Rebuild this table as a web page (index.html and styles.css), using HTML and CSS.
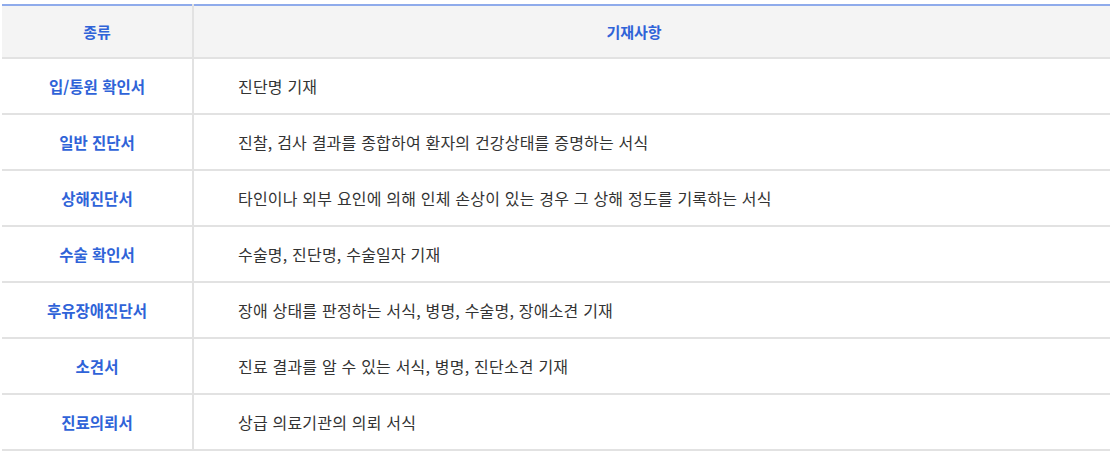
FILE: index.html
```html
<!DOCTYPE html>
<html lang="ko">
<head>
<meta charset="utf-8">
<link rel="stylesheet" href="styles.css">
</head>
<body>
<div class="wrap">
  <table class="doc-table">
    <thead>
      <tr>
        <th class="col-type">종류</th>
        <th class="col-desc">기재사항</th>
      </tr>
    </thead>
    <tbody>
      <tr><td class="type">입/통원 확인서</td><td class="desc">진단명 기재</td></tr>
      <tr><td class="type">일반 진단서</td><td class="desc">진찰, 검사 결과를 종합하여 환자의 건강상태를 증명하는 서식</td></tr>
      <tr><td class="type">상해진단서</td><td class="desc">타인이나 외부 요인에 의해 인체 손상이 있는 경우 그 상해 정도를 기록하는 서식</td></tr>
      <tr><td class="type">수술 확인서</td><td class="desc">수술명, 진단명, 수술일자 기재</td></tr>
      <tr><td class="type">후유장애진단서</td><td class="desc">장애 상태를 판정하는 서식, 병명, 수술명, 장애소견 기재</td></tr>
      <tr><td class="type">소견서</td><td class="desc">진료 결과를 알 수 있는 서식, 병명, 진단소견 기재</td></tr>
      <tr><td class="type">진료의뢰서</td><td class="desc">상급 의료기관의 의뢰 서식</td></tr>
    </tbody>
  </table>
</div>
</body>
</html>
```

FILE: styles.css
```css
html, body {
  margin: 0;
  padding: 0;
  background: #ffffff;
}
body {
  font-family: "Noto Sans CJK KR", "Noto Sans", sans-serif;
}
.wrap {
  padding: 4px 0 0 2px;
}
.doc-table {
  width: 1108px;
  border-collapse: collapse;
  table-layout: fixed;
  border-top: 2px solid #8fabeb;
}
.doc-table th {
  background: #f4f4f4;
  height: 51px;
  padding: 0;
  font-size: 15px;
  font-weight: 700;
  color: #2f63d8;
  border-bottom: 2px solid #e2e2e2;
  text-align: center;
}
.col-type {
  width: 190px;
  border-right: 2px solid #e2e2e2;
}
.doc-table th.col-desc {
  padding-right: 36px;
}
.doc-table td {
  height: 54px;
  padding: 0;
  border-bottom: 2px solid #e2e2e2;
}
.doc-table td.type {
  text-align: center;
  font-size: 15.5px;
  color: #2f63d8;
  font-weight: 700;
  border-right: 2px solid #e2e2e2;
}
.doc-table td.desc {
  font-size: 16px;
  color: #333333;
  padding-left: 44px;
  letter-spacing: 0.2px;
}
```
